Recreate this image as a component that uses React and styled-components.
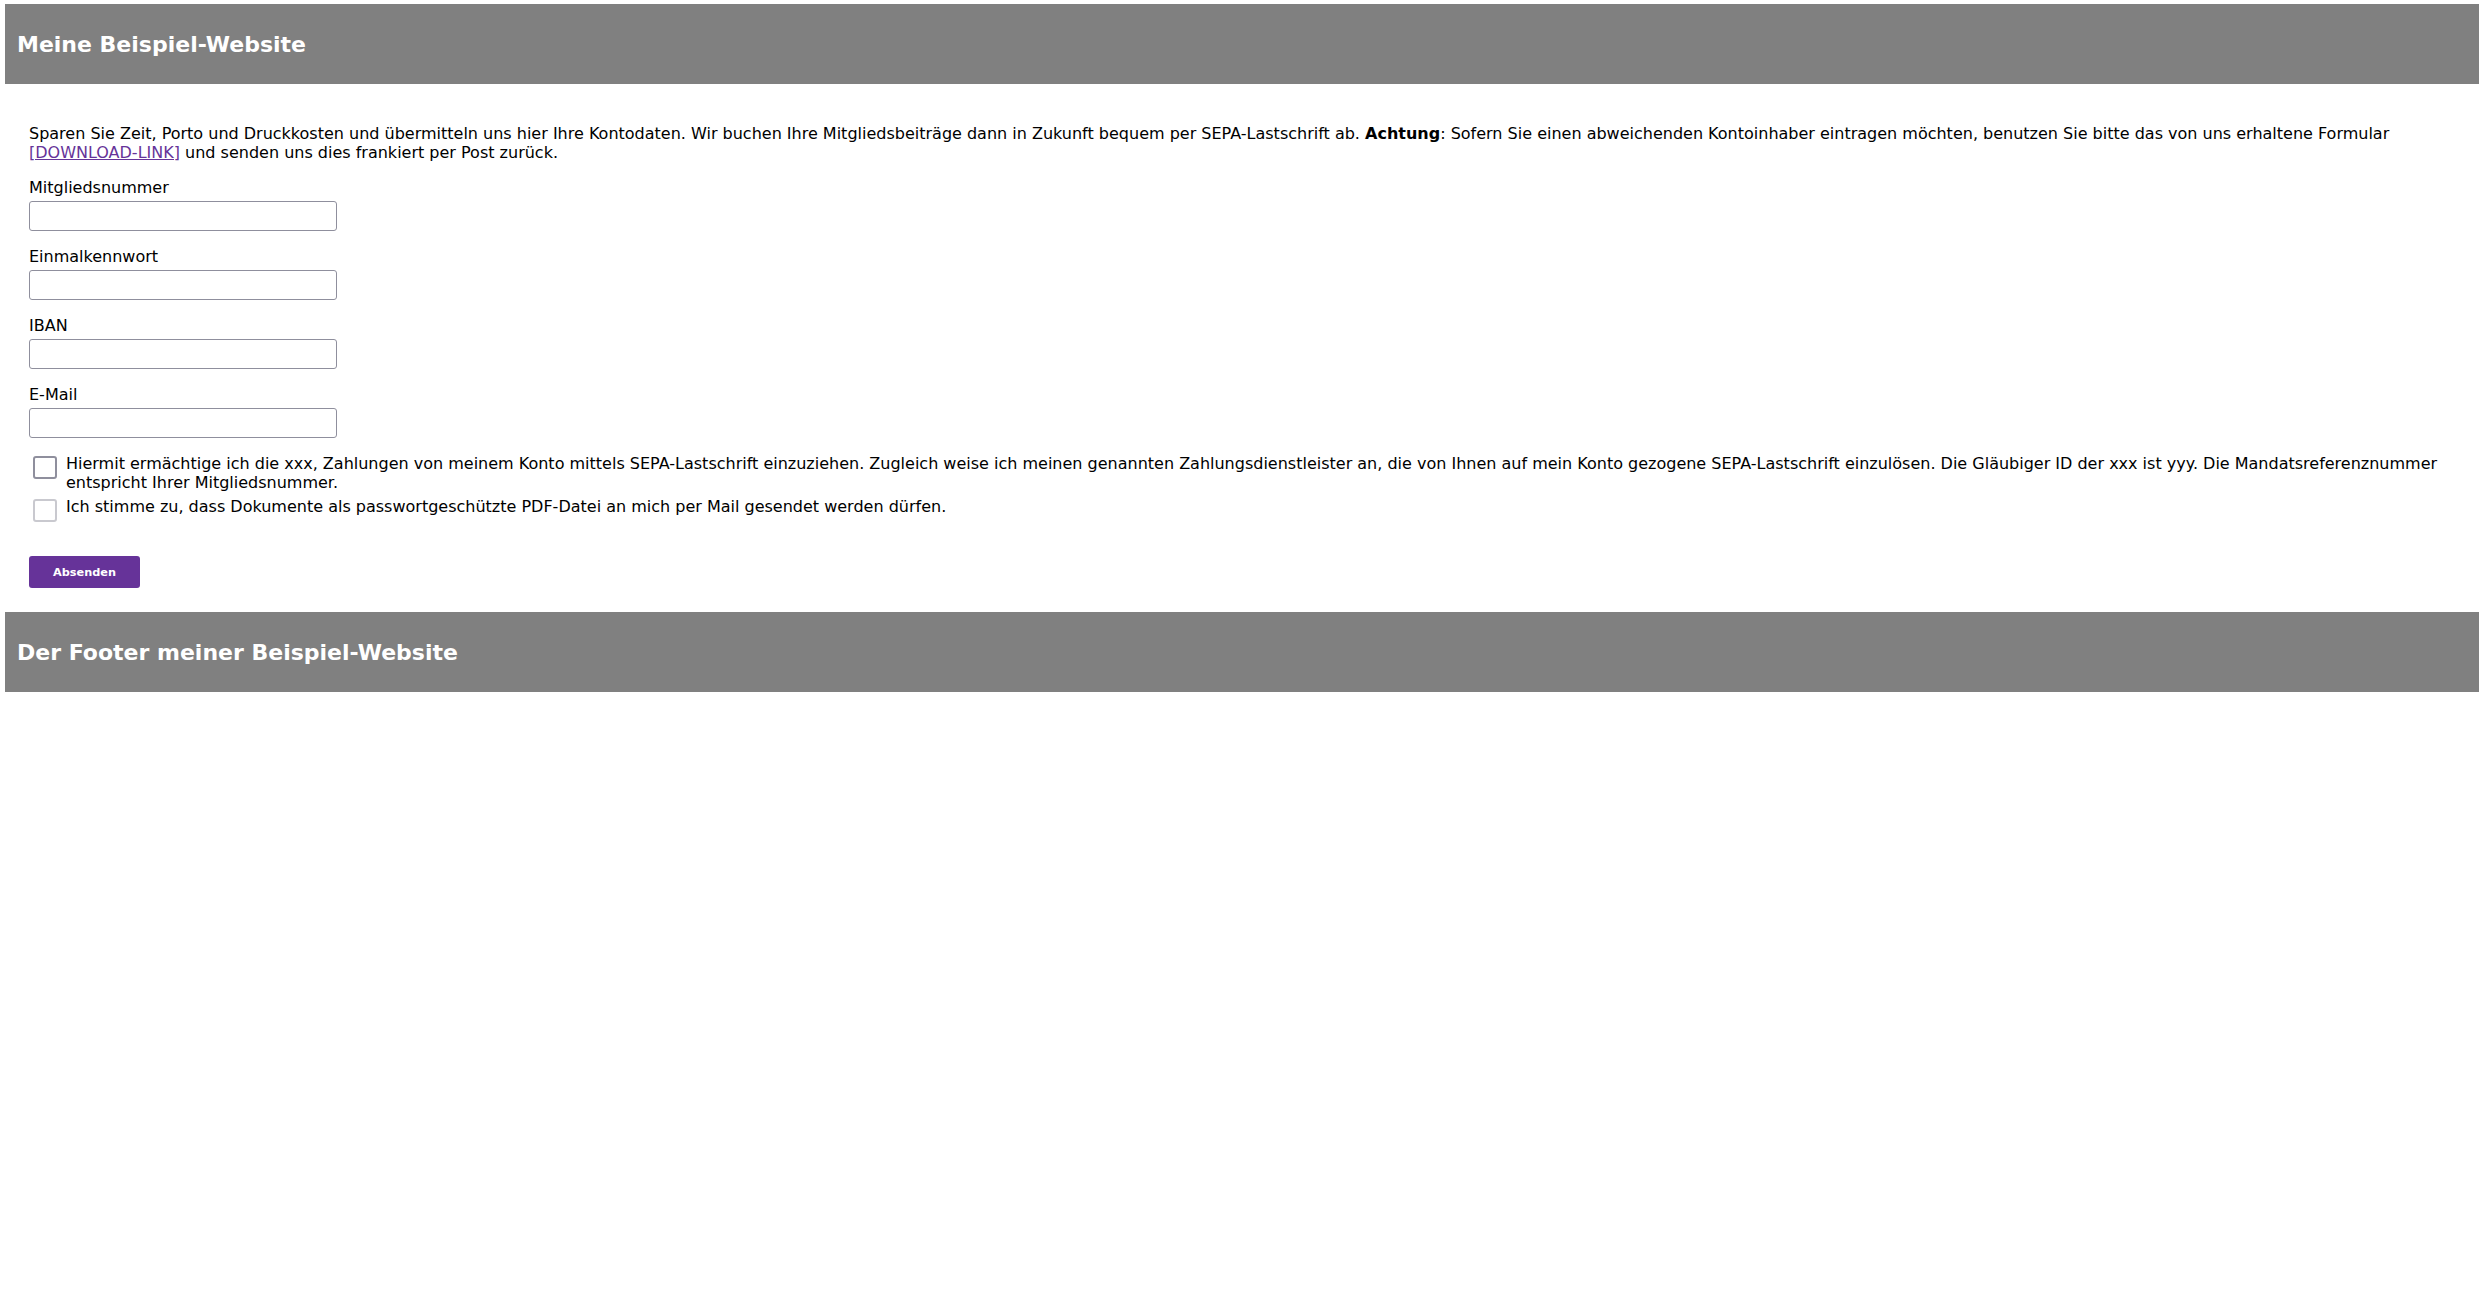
import React from 'react'
import styled, { createGlobalStyle } from 'styled-components'

const GlobalStyle = createGlobalStyle`
  body {
    margin: 4px 4px 0 5px;
    font-family: "DejaVu Sans", sans-serif;
    font-size: 16px;
    color: #000;
    background: #fff;
  }
`

const fields = ['Mitgliedsnummer', 'Einmalkennwort', 'IBAN', 'E-Mail']

export default function App() {
  return (
    <>
      <GlobalStyle />
      <Bar as="header">
        <BarTitle>Meine Beispiel-Website</BarTitle>
      </Bar>

      <Main>
        <Intro>
          Sparen Sie Zeit, Porto und Druckkosten und übermitteln uns hier Ihre Kontodaten. Wir buchen Ihre
          Mitgliedsbeiträge dann in Zukunft bequem per SEPA-Lastschrift ab. <strong>Achtung</strong>: Sofern Sie
          einen abweichenden Kontoinhaber eintragen möchten, benutzen Sie bitte das von uns erhaltene Formular{' '}
          <DownloadLink href="#">[DOWNLOAD-LINK]</DownloadLink> und senden uns dies frankiert per Post zurück.
        </Intro>

        {fields.map((name) => (
          <Field key={name}>
            <Label htmlFor={name}>{name}</Label>
            <TextInput id={name} type="text" />
          </Field>
        ))}

        <Consents>
          <CheckRow>
            <Check type="checkbox" />
            <span>
              Hiermit ermächtige ich die xxx, Zahlungen von meinem Konto mittels SEPA-Lastschrift einzuziehen.
              Zugleich weise ich meinen genannten Zahlungsdienstleister an, die von Ihnen auf mein Konto gezogene
              SEPA-Lastschrift einzulösen. Die Gläubiger ID der xxx ist yyy. Die Mandatsreferenznummer entspricht
              Ihrer Mitgliedsnummer.
            </span>
          </CheckRow>
          <CheckRow>
            <Check type="checkbox" $light />
            <span>Ich stimme zu, dass Dokumente als passwortgeschützte PDF-Datei an mich per Mail gesendet werden dürfen.</span>
          </CheckRow>
        </Consents>

        <SubmitButton type="button">Absenden</SubmitButton>
      </Main>

      <Bar as="footer">
        <BarTitle>Der Footer meiner Beispiel-Website</BarTitle>
      </Bar>
    </>
  )
}

const Bar = styled.div`
  display: flex;
  align-items: center;
  height: 80px;
  padding: 0 12px;
  background-color: #808080;
`

const BarTitle = styled.div`
  color: #fff;
  font-size: 22px;
  font-weight: bold;
`

const Main = styled.main`
  display: flex;
  flex-direction: column;
  align-items: flex-start;
  padding: 40px 24px 24px 24px;
`

const Intro = styled.p`
  margin: 0 0 16px 0;
  line-height: normal;
`

const DownloadLink = styled.a`
  color: #663399;
`

const Field = styled.div`
  display: flex;
  flex-direction: column;
  gap: 4px;
  margin-bottom: 16px;
`

const Label = styled.label`
  font-size: 16px;
`

const TextInput = styled.input`
  box-sizing: border-box;
  width: 308px;
  height: 30px;
  margin: 0;
  padding: 2px 4px;
  border: 1px solid #8f8f9d;
  border-radius: 3px;
  background: #fff;
  font-family: "DejaVu Sans", sans-serif;
  font-size: 14px;
`

const Consents = styled.div`
  display: flex;
  flex-direction: column;
  gap: 5px;
`

const CheckRow = styled.label`
  display: flex;
  align-items: flex-start;
  gap: 9px;
  line-height: normal;
`

const Check = styled.input`
  appearance: none;
  flex: none;
  box-sizing: border-box;
  width: 24px;
  height: 23px;
  margin: 2px 0 0 4px;
  border: 2px solid ${(p) => (p.$light ? '#c9c9cf' : '#8f8f9d')};
  border-radius: 3px;
  background: #fff;
`

const SubmitButton = styled.button`
  margin-top: 34px;
  width: 111px;
  height: 32px;
  border: none;
  border-radius: 3px;
  background-color: #663399;
  color: #fff;
  font-family: "DejaVu Sans", sans-serif;
  font-size: 11.3px;
  font-weight: bold;
  cursor: pointer;
`
